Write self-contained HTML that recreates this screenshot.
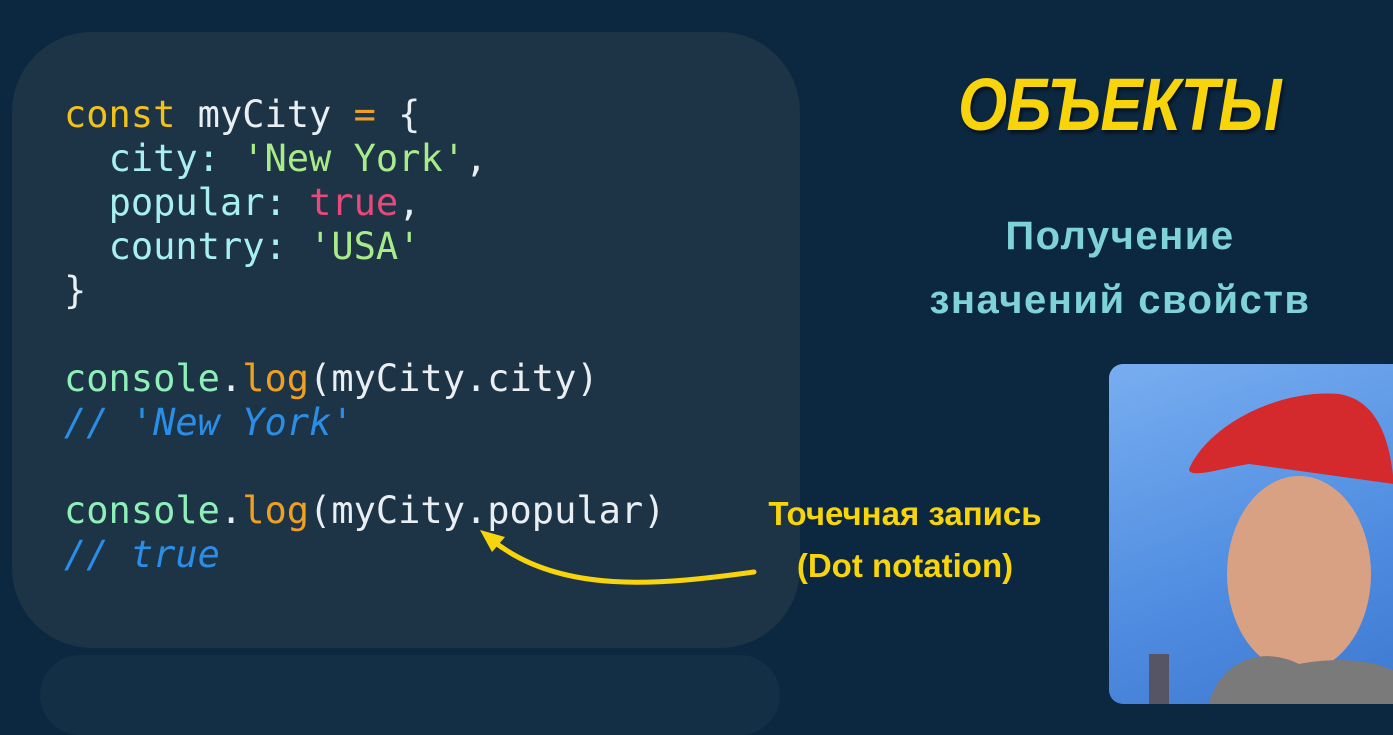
<!DOCTYPE html>
<html><head><meta charset="utf-8"><style>
html,body{margin:0;padding:0}
body{width:1393px;height:690px;background:#0c2840;position:relative;overflow:hidden;font-family:"Liberation Sans","DejaVu Sans",sans-serif}
.panel{position:absolute;left:12px;top:32px;width:788px;height:616px;background:#1d3446;border-radius:80px}
.panel2{position:absolute;left:40px;top:655px;width:740px;height:80px;background:#132f45;border-radius:60px}
pre{position:absolute;left:64px;top:93px;margin:0;font-family:"DejaVu Sans Mono","Liberation Mono",monospace;font-size:37px;line-height:44px;color:#e8eef2}
.k{color:#f1c21b}.o{color:#f0a020}.p{color:#a8f0f0}.s{color:#a8ec8a}.t{color:#e8497a}.g{color:#8ef0b8}.l{color:#f0a020}.c{color:#2a8ee8;font-style:italic}
.title{position:absolute;left:958px;top:62px;font-size:74px;font-weight:bold;font-style:italic;color:#f8d40c;letter-spacing:-1px;transform:scaleX(0.855);transform-origin:left;text-shadow:2px 3px 4px rgba(0,0,0,.6)}
.sub{position:absolute;left:880px;width:480px;text-align:center;color:#7fd3d8;font-size:40px;font-weight:bold;line-height:64px;top:204px;letter-spacing:1.5px}
.note{position:absolute;left:740px;width:330px;text-align:center;color:#f8d40c;font-size:33px;font-weight:bold;line-height:52px;top:488px}
.photo{position:absolute;left:1109px;top:364px;width:300px;height:340px;border-radius:14px;overflow:hidden;background:linear-gradient(160deg,#78aef0,#4f8ce0 60%,#3d78d0)}
</style></head><body>
<div class="panel"></div><div class="panel2"></div>
<pre><span class="k">const</span> myCity <span class="o">=</span> {
  <span class="p">city:</span> <span class="s">'New York'</span>,
  <span class="p">popular:</span> <span class="t">true</span>,
  <span class="p">country:</span> <span class="s">'USA'</span>
}

<span class="g">console</span>.<span class="l">log</span>(myCity.city)
<span class="c">// 'New York'</span>

<span class="g">console</span>.<span class="l">log</span>(myCity.popular)
<span class="c">// true</span></pre>
<svg style="position:absolute;left:0;top:0" width="1393" height="690">
<path d="M754 572 C660 585 560 595 492 540" stroke="#f8d40c" stroke-width="5" fill="none" stroke-linecap="round"/>
<path d="M480 530 L505 537 L492 552 Z" fill="#f8d40c"/>
</svg>
<div class="title">ОБЪЕКТЫ</div>
<div class="sub">Получение<br>значений свойств</div>
<div class="note">Точечная запись<br>(Dot notation)</div>
<div class="photo">
<svg width="300" height="340">
<ellipse cx="190" cy="210" rx="72" ry="98" fill="#d9a184"/>
<path d="M80 105 C100 60 170 25 230 30 C260 35 280 60 285 120 L140 100 C110 105 80 115 80 105 Z" fill="#d42a2e"/>
<path d="M100 340 C110 300 150 280 190 300 C240 290 290 300 300 320 L300 340 Z" fill="#7a7a7a"/>
<rect x="40" y="290" width="20" height="50" fill="#556"/>
</svg>
</div>
</body></html>
